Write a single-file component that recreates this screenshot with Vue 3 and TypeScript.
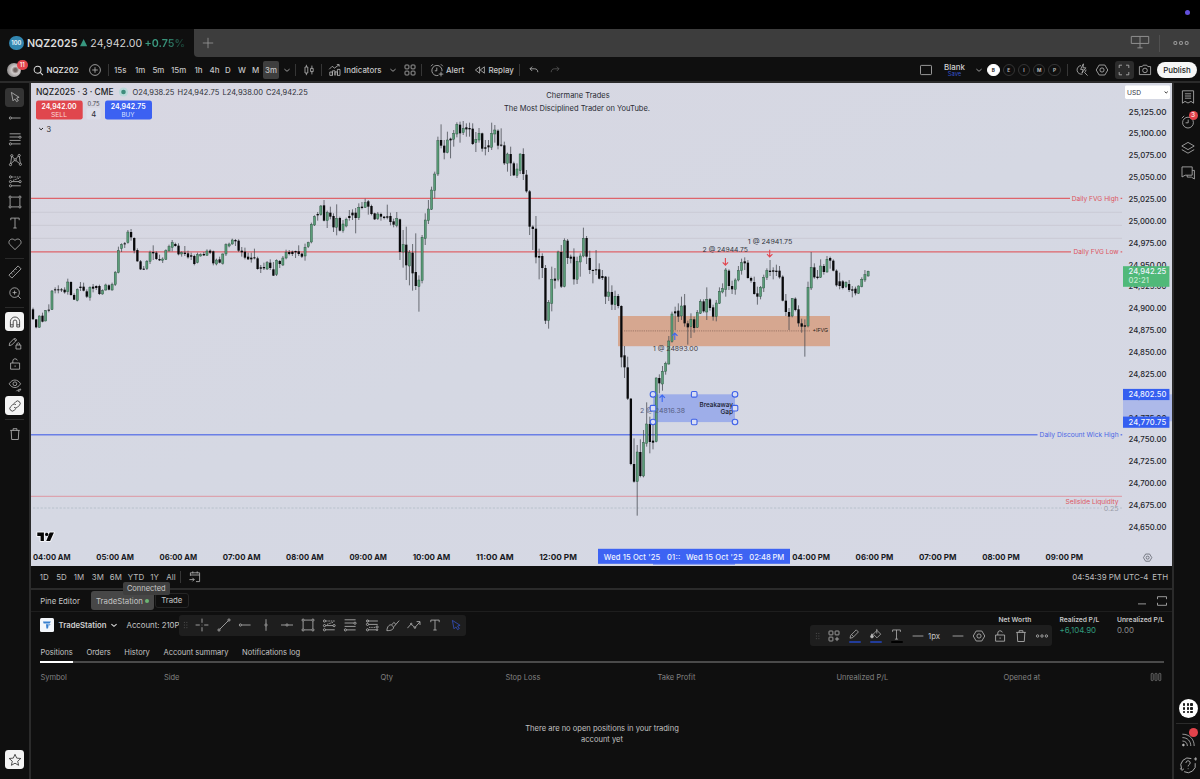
<script setup lang="ts">
interface Candle { x: number; up: boolean; high: number; top: number; bottom: number; low: number }
interface Label { x: number; y: number; w: number; t: string; s?: number; c?: string; b?: number }

/* Each block is a run of candles: direction, high, body top, body bottom, low, in thirds of a pixel from `base`. */
const blocks: { base: number; rows: string }[] = [
  {
    base: 80,
    rows: `b683 688 718 718|b718 718 742 745|g706 708 742 743|b698 707 725 727|g690 692 723 724|b673 689 692 697|g630 633 689 690|b622 628 631 640|b616 628 631 640|b624 628 631 636|b622 629 637 641|g596 606 635 644|b604 606 645 647|b640 645 659 660|g625 629 661 664|b606 620 624 633|b608 620 632 634|b628 634 650 654|g619 622 652 662|b612 620 626 637|b616 618 624 630|b614 618 642 645|g628 632 642 644|g611 615 630 632|b613 616 629 631|g608 614 630 632|g573 578 614 618|g500 512 578 580|g490 494 506 516|b486 490 493 504|g450 456 488 491|b447 456 472 482|b472 474 512 520|b505 510 544 545|b540 544 568 570|b558 566 569 570|g540 544 566 570|g512 518 544 552|b496 516 520 540|b514 518 537 540|b524 537 541 543|g532 537 541 549|g508 512 538 540|g494 500 513 514|g480 488 502 514|b488 492 498 500|b490 497 523 526|g514 518 522 530|b498 518 522 528|b512 520 532 536|b518 526 530 540|b524 528 552 556|g518 524 548 550|g520 524 528 530|b516 522 526 528|g508 513 526 527|b508 512 518 522|b512 514 550 556|g536 540 552 556|b530 538 548 550|g520 522 550 554|g490 494 522 528|g488 492 498 502|g476 480 492 494|b477 480 484 498|b478 482 512 516`,
  },
  {
    base: 180,
    rows: `b201 212 217 230|b203 215 233 238|b218 230 238 240|b218 233 238 248|b206 232 235 238|b230 235 267 269|b255 262 266 279|b248 261 265 270|g243 248 267 270|b238 248 264 270|b246 268 287 288|g238 241 284 288|b240 243 252 264|g228 234 255 258|g209 217 234 238|b210 216 222 226|b212 215 222 228|b212 213 217 234|b196 214 222 228|b218 221 230 234|g191 202 228 242|g185 188 200 204|g128 133 186 190|g106 110 135 138|b96 102 106 122|g75 78 104 107|b60 76 122 124|g92 98 122 144|b80 98 110 118|b100 108 142 156|g73 115 142 166|b110 114 152 154|g120 132 152 158|g113 118 138 142|b90 108 114 122|b88 98 106 120|b84 98 114 160|g70 82 113 120|b66 80 84 88|g56 68 82 84|b60 64 80 104|b74 78 102 106|b98 100 118 120|g96 102 116 120|b98 102 110 122|b108 110 114 118|b74 109 113 118|b98 108 126 136|b116 124 134 142|g96 116 136 142|b116 118 216 240|g150 194 216 263|b140 194 256 300|g210 218 258 316|b192 218 280 332|b160 276 318 330|g286 300 320 395`,
  },
  {
    base: 110,
    rows: `g375 382 512 520|g310 330 386 405|g270 297 332 342|g230 240 298 300|g185 192 242 265|g80 92 192 198|b43 90 107 115|b90 107 128 148|g65 90 128 130|b83 86 91 145|g60 70 88 110|g37 43 72 82|b35 44 70 98|g33 55 68 75|b40 52 58 80|b38 54 58 80|b40 56 102 105|g66 88 98 126|g54 70 90 98|b68 70 116 125|b90 112 116 136|b90 106 112 126|g38 70 112 120|g45 60 72 98|b58 62 107 118|b55 104 107 110|b95 106 160 165|g128 132 160 185|b110 132 160 198|b155 160 196 198|g160 177 196 204|g130 132 182 192|b115 132 192 210|b180 194 244 248|b240 244 350 375|b346 350 357 420|b318 356 442 460|b416 438 443 508|b430 438 474 504|b465 474 632 642|g570 577 632 656|g470 508 580 604|b474 506 512 536|g422 426 508 514|b405 426 530 534|g385 392 530 532|b387 392 444 462|b434 440 446 460|b415 440 508 524|g440 454 508 522|g430 438 456 500|g353 385 438 442|b378 384 440 462`,
  },
  {
    base: 230,
    rows: `b62 84 120 132|b118 120 123 160|b60 118 121 135|b100 118 146 148|b120 138 144 150|b138 140 200 222|g140 186 200 213|b166 186 224 240|g182 199 224 240|b192 198 228 235|b226 228 382 412|b348 376 412 444|b380 412 506 510|b504 506 702 706|b625 702 755 758|g645 666 755 857|b628 666 738 742|g600 638 738 742|g517 582 640 650|b560 582 636 670|b570 632 638 658|g442 444 635 637|b433 444 460 490|g408 424 462 482|g395 400 424 434|g318 333 402 404|g245 252 335 338|b230 244 250 300|b220 242 260 276|g200 228 258 270|b192 226 280 290|b272 280 292 344|g250 268 290 324|b260 268 294 308|g240 248 292 294|g208 215 250 252|b208 214 244 248|g172 208 246 270|b204 208 234 242|b224 232 260 272|g210 219 260 274|g172 184 220 222|g160 176 186 190|g114 120 178 200|b118 122 168 180|b152 168 178 192|g145 150 178 194|g108 122 150 154|g86 98 122 134|b82 94 100 120|b90 98 144 146|b140 144 152 158|b140 156 192 194|b170 190 200 224|g168 172 200 208|g134 142 174 186|g115 122 142 150|b90 122 126 138|b112 121 125 148|b104 122 126 138|b108 122 142 146|b136 140 212 214|b192 212 246 258|b234 246 260 300|g204 206 258 262|b202 206 240 244|b226 238 280 290|b266 280 290 308|b268 286 290 380|g155 172 288 292|g66 112 174 180|b100 112 142 146|b120 140 144 148|g88 108 142 144|b102 108 126 134|g78 88 126 128|b80 84 92 116|b88 92 122 124|b118 122 166 170|b128 154 168 178|b150 154 174 178|g154 158 170 174|b150 162 180 186|b168 178 182 202|b170 176 190 196|g166 168 190 192|g142 148 170 172|g120 134 150 156|g122 124 138 140`,
  },
]

const candles: Candle[] = []
for (const block of blocks) {
  for (const row of block.rows.split('|')) {
    const [high, top, bottom, low] = row.slice(1).split(' ').map((n) => block.base + Number(n) / 3)
    candles.push({ x: 33 + candles.length * 3.1633, up: row[0] === 'g', high, top, bottom, low })
  }
}

const prices = Array.from({ length: 20 }, (_, i) => ({
  y: 111.8 + i * 21.85,
  t: (25125 - i * 25).toLocaleString('en-US', { minimumFractionDigits: 2 }),
}))
const hours = ['04:00 AM', '05:00 AM', '06:00 AM', '07:00 AM', '08:00 AM', '09:00 AM', '10:00 AM', '11:00 AM', '12:00 PM', '', '', '', '04:00 PM', '06:00 PM', '07:00 PM', '08:00 PM', '09:00 PM']
  .map((t, i) => ({ t, x: 33 + 63.28 * i }))
  .filter((h) => h.t)

const labels: Label[] = [
  { x: 36, y: 92.2, w: 77.5, t: 'NQZ2025 · 3 · CME', s: 8.7, c: '#1b1c22', b: 500 },
  { x: 132.5, y: 92.5, w: 41.8, t: 'O24,938.25', s: 7.3 },
  { x: 177.6, y: 92.5, w: 41.6, t: 'H24,942.75', s: 7.3 },
  { x: 222.5, y: 92.5, w: 40.6, t: 'L24,938.00', s: 7.3 },
  { x: 266, y: 92.5, w: 41.7, t: 'C24,942.25', s: 7.3 },
  { x: 41.5, y: 106.6, w: 35, t: '24,942.00', s: 7, c: '#fff', b: 600 },
  { x: 51, y: 114.4, w: 16, t: 'SELL', s: 6.3, c: '#fbdada' },
  { x: 110.7, y: 106.6, w: 35, t: '24,942.75', s: 7, c: '#fff', b: 600 },
  { x: 121.5, y: 114.4, w: 13, t: 'BUY', s: 6.3, c: '#dbe2ff' },
  { x: 87.6, y: 103.8, w: 12, t: '0.75', s: 5.6, c: '#44464f' },
  { x: 91.2, y: 114, w: 5, t: '4', s: 7.8 },
  { x: 46.6, y: 129.5, w: 4.6, t: '3', s: 7.2 },
  { x: 546.3, y: 95, w: 63.4, t: 'Chermane Trades', s: 7.7 },
  { x: 504, y: 108, w: 146, t: 'The Most Disciplined Trader on YouTube.', s: 7.7 },
  { x: 1071.7, y: 198.5, w: 47, t: 'Daily FVG High', s: 6.7, c: '#dd5560' },
  { x: 1073.6, y: 252, w: 45, t: 'Daily FVG Low', s: 6.7, c: '#dd5560' },
  { x: 1039.6, y: 434.8, w: 79, t: 'Daily Discount Wick High', s: 6.7, c: '#4b68e4' },
  { x: 1065.6, y: 502, w: 53, t: 'Sellside Liquidity', s: 6.7, c: '#dd5560' },
  { x: 1103.7, y: 508.4, w: 15, t: '0.25', s: 6.4, c: '#9a9da8' },
  { x: 702.6, y: 249.3, w: 45.4, t: '2 @ 24944.75', s: 6.7, c: '#33363e' },
  { x: 747.8, y: 241.3, w: 44.6, t: '1 @ 24941.75', s: 6.7, c: '#33363e' },
  { x: 653, y: 348.4, w: 45, t: '1 @ 24893.00', s: 6.7, c: '#463d41' },
  { x: 640, y: 410.3, w: 45, t: '2 @ 24816.38', s: 6.7, c: '#555c80' },
  { x: 812.5, y: 330.5, w: 15.5, t: '+IFVG', s: 5.4, c: '#2a1d18' },
  { x: 699.5, y: 404.7, w: 33.5, t: 'Breakaway', s: 6.6, c: '#15182a', b: 500 },
  { x: 720.4, y: 411.6, w: 12.6, t: 'Gap', s: 6.6, c: '#15182a', b: 500 },
  { x: 1127, y: 92.2, w: 14, t: 'USD', s: 6.8, c: '#33353c' },
]

const circ = (x: number, y: number, r = 1.1) => `<circle cx="${x}" cy="${y}" r="${r}"/>`
const icons: Record<string, string> = {
  cursor: '<path d="M3.4 2.4l1.6 8.4 1.9-1.9 1.7 2.7 1.7-1-1.7-2.6 2.5-.7z"/>',
  hray: circ(2.4, 7) + '<path d="M3.6 7h9"/>',
  fib: '<path d="M1.6 1.8h11M1.6 5h9.3M1.6 8.4h11M3.6 11.9h9"/>' + circ(12, 5.2) + circ(2.4, 11.9),
  xabcd: '<path d="M3.6 3.7L2.6 10.6M4.4 3.6l2 2.3M7.8 6L10.4 3M11.4 3.7l.9 6.6M3 10.7l3.4-3.3M7.9 7.5l3.5 3"/>' + circ(3.8, 2.7) + circ(11.2, 2.5) + circ(2.5, 11.6) + circ(12.4, 11.3) + circ(7.2, 6.8),
  long: '<path stroke-dasharray="1.6 .8" d="M3.9 3h9M5 6.4l6-2.2"/><path d="M3.7 7.6h7.4M3.7 11.8h9"/>' + circ(2.5, 3) + circ(2.5, 7.6) + circ(12.1, 7.6) + circ(2.5, 11.8),
  proj: '<path d="M2.5 3h10.4M3.7 6.4h9M3.7 11.8h7.4"/><path stroke-dasharray="1.4 .9" d="M4 9.4h7"/>' + circ(2.5, 3) + circ(2.5, 6.4) + circ(12.1, 9) + circ(2.5, 11.8) + circ(12, 11.8, .8),
  rect: '<path d="M3.4 2.1h7.2M3.4 11.9h7.2M2.1 3.4v7.2M11.9 3.4v7.2"/>' + circ(2.1, 2.1) + circ(11.9, 2.1) + circ(2.1, 11.9) + circ(11.9, 11.9),
  text: '<path d="M2.8 4.2V2.1h8.4v2.1M7 2.1v9.9M5.3 12h3.4"/>',
  heart: '<path d="M7 12.6L1.7 7.4C-.9 4.2 3.6-.2 7 3.4c3.4-3.6 7.9.8 5.3 4z"/>',
  ruler: '<path d="M.9 10.1l9.2-9.2 3 3-9.2 9.2zM3.2 7.8l1.3 1.3M5.2 5.8l1.3 1.3M7.3 3.7l1.3 1.3"/>',
  zoom: '<circle cx="6.6" cy="6.6" r="4.8"/><path d="M10.1 10.1l2.6 2.6M6.6 4.6v4M4.6 6.6h4"/>',
  magnet: '<path d="M2.4 12V6.6a4.6 4.6 0 019.2 0V12H8.8V6.8a1.8 1.8 0 00-3.6 0V12zM2.4 9.8h2.8M8.8 9.8h2.8"/>',
  penlock: '<path d="M1.2 9.6l.5-2.6 5-5 2 2-5 5zM5.8 3l2 2"/><path d="M8 9h4.8v4H8zM9 9V7.8a1.4 1.4 0 012.7 0V9"/>',
  lock: '<path d="M2.6 6h9v6.2h-9zM4.8 6V4a2.3 2.3 0 014.5-.6M7.1 8.4v1.5"/>',
  eye: '<path d="M1.2 5.8c3-5 8.4-5 11.4 0-3 5-8.4 5-11.4 0z"/><circle cx="6.9" cy="5.8" r="1.9"/><path d="M8.4 13.2l1.5-1.5M10 13.2c2 .3 2.6-1 2.8-2.2l-2.3.7z"/>',
  link: '<path d="M6 4.5l1.8-1.8a2.5 2.5 0 013.6 3.6L9.5 8.2a2.5 2.5 0 01-3.4.1M8 9.5l-1.8 1.8a2.5 2.5 0 01-3.6-3.6l1.9-1.9a2.5 2.5 0 013.4-.1"/>',
  trash: '<path d="M2.2 3.4h9.6M5.1 3.4V1.7h3.8v1.7M3.2 3.4l.5 9.1h6.6l.5-9.1"/>',
  star: '<path d="M7 1.3l1.7 3.8 4.1.4-3.1 2.7.9 4.1L7 10.2l-3.6 2.1.9-4.1-3.1-2.7 4.1-.4z"/>',
  list: '<path d="M1.4.8h11.2v12.4l-2.6-1.8-3 1.6-3-1.6-2.6 1.8zM3.9 3.8h6.2M3.9 6h6.2M3.9 8.2h6.2"/>',
  alarm: '<circle cx="7" cy="7.6" r="5.4"/><path d="M7.2 4.6v3.2H4.6M.8 3.2l2.4-2.4"/>',
  alert: '<path d="M8.4 12.4A5.1 5.1 0 1112 8.2M6.8 4.6v3.2H4.8M1 3.2l2-2M12.8 3.2l-2-2M11 8.8v4.6M8.7 11.1h4.6"/>',
  layers: '<path d="M7 1.4l6.2 3.6L7 8.6.8 5zM.8 8.6L7 12.2l6.2-3.6"/>',
  chat: '<path d="M1 .9h10.2v8.3H4.2L1 11zM11.4 4.4h2V13l-3-1.9H6.2V9.4"/>',
  search: '<circle cx="6" cy="6.2" r="3.7"/><path d="M8.8 9l3 3"/>',
  plus: '<circle cx="7" cy="7" r="5.4"/><path d="M7 4.2v5.6M4.2 7h5.6"/>',
  down: '<path d="M4.4 6.1L7 8.3l2.6-2.2"/>',
  bars: '<path d="M3 4h2.8v6H3zM4.4 1.8V4M4.4 10v2.2M8.6 5.4h2.6v3.2H8.6zM9.9 2.6v2.8M9.9 8.6v2.8"/>',
  indic: '<path d="M1.8 12.4V9h2.6v3.4zM4.4 12.4V7.8H7v4.6M7 12.4V8.9h2.4v3.5M9.4 12.4v-6H12v6zM1.2 6.3l3-3 2.3 1.8L11 1.8M8.8 1.6h2.4v2"/>',
  grid: '<rect x="2" y="2" width="3.9" height="3.9" rx=".8"/><rect x="8.1" y="2" width="3.9" height="3.9" rx=".8"/><rect x="2" y="8.1" width="3.9" height="3.9" rx=".8"/><rect x="8.1" y="8.1" width="3.9" height="3.9" rx=".8"/>',
  gridplus: '<rect x="2" y="2" width="3.9" height="3.9" rx=".6"/><rect x="8.1" y="2" width="3.9" height="3.9" rx=".6"/><rect x="2" y="8.1" width="3.9" height="3.9" rx=".6"/><path d="M10 7.9v4.2M7.9 10h4.2"/>',
  replay: '<path d="M6.6 3.8v6.4L2.4 7zM11.4 3.8v6.4L7.2 7z"/>',
  undo: '<path d="M5.2 3.6L3 5.8 5.2 8M3 5.8h4.6c2 0 3.2 1.2 3.2 3.4"/>',
  redo: '<path d="M8.8 3.6L11 5.8 8.8 8M11 5.8H6.4c-2 0-3.2 1.2-3.2 3.4"/>',
  frame: '<rect x="1.5" y="2.4" width="11" height="9.2" rx=".8"/>',
  quick: '<path d="M6 2.6A4.3 4.3 0 107.6 11M9.6 9.6l3 3M11 6.6c0 1.2-.5 2.2-1.4 3M8.4.8L5.6 6.4h2.6L7 10l3.8-5.2H8z"/>',
  hex: '<path d="M4.2 2h5.6l3 5-3 5H4.2l-3-5z"/><circle cx="7" cy="7" r="2.1"/>',
  full: '<path d="M2.2 5V2.2H5M9 2.2h2.8V5M11.8 9v2.8H9M5 11.8H2.2V9"/>',
  maxi: '<path d="M2.5 5.2V2.7h9v2.5M2.5 8.8v2.5h9V8.8"/>',
  camera: '<path d="M1.4 3.6h2.8l1-1.4h3.6l1 1.4h2.8v8H1.4z"/><circle cx="7" cy="7.4" r="2.3"/>',
  cal: '<path d="M2.4 5.8V2.8h9.2v8.8H8M2.4 5h9.2M4.8 1.4v2M9.2 1.4v2M1.4 9.6h4.8M4.4 7.8l1.8 1.8-1.8 1.8"/>',
  cross: '<path d="M7 .6v4.2M7 9.2v4.2M.6 7h4.2M9.2 7h4.2M6.7 7h.6"/>',
  trend: circ(2, 12) + circ(12, 2) + '<path d="M2.9 11.1l8.2-8.2"/>',
  vline: '<path d="M7 1.2v4.6M7 8.2v4.6"/>' + circ(7, 7),
  hline: '<path d="M1 7h4.8M8.2 7H13"/>' + circ(7, 7),
  brush: '<path d="M.8 12.6c.6-4 2-5.8 4.4-5.8l2.4 2.2c0 2.6-2.6 3.8-6.8 3.6zM5.8 6.8l2-2.4M7.8 8.8L13.2 2.6M7.8 4.4l2 1.8"/>',
  path: '<path d="M.4 10.2l3.2-3.6M4.8 6.6l2.6 2.6M8.4 9l4.4-5M9.6 3.6h3.4V7"/>' + circ(4.2, 6, .8) + circ(7.9, 9.6, .8),
  pencil: '<path d="M2.2 11l.7-3 6-6 2.3 2.3-6 6zM3.9 7.2l2.1 2.1"/>',
  bucket: '<path d="M4.6 6.6l4-4 4 4-4 4zM8.4 6V1"/><path fill="currentColor" d="M3.2 6.2L1.6 9.2c0 2 3.2 2 3.2 0z"/>',
  dots: circ(2.6, 7, 1.2) + circ(7, 7, 1.2) + circ(11.4, 7, 1.2),
  line: '<path d="M1.6 7h10.8"/>',
  rss: '<path d="M1.4 1.2c7 0 11.8 4.8 11.8 11.8M1.4 4.6c5 0 8.4 3.4 8.4 8.4M1.4 8c3 0 5 2 5 5"/><circle cx="2.4" cy="12" r=".9" fill="currentColor"/>',
  help: '<path d="M9.6 2A5.9 5.9 0 002 10M4 12.2A5.9 5.9 0 0012.6 5.6M1 9.6l1.2 1.6 1.6-1.2M13 3.6V1M11.6 2.3h2.7M5.4 5.4c0-2.2 3.3-2.2 3.3 0 0 1.3-1.6 1.2-1.6 2.7M7.1 9.6v.6"/>',
  columns: '<rect x="2.2" y="3.4" width="2" height="7.2" rx=".6"/><rect x="6" y="3.4" width="2" height="7.2" rx=".6"/><rect x="9.8" y="3.4" width="2" height="7.2" rx=".6"/>',
  min: '<path d="M3 9.9h8"/>',
  layout: '<path d="M.9 2.4h12.2v4.9H.9zM7 2.4v8M5.2 10.4h3.6"/>',
}

const leftTools: { n: string; on?: string; gap?: boolean }[] = [
  { n: 'cursor', on: 'dim' }, { n: 'hray' }, { n: 'fib' }, { n: 'xabcd' }, { n: 'long' }, { n: 'rect' }, { n: 'text' }, { n: 'heart' },
  { n: 'ruler', gap: true }, { n: 'zoom' },
  { n: 'magnet', on: 'lit', gap: true }, { n: 'penlock' }, { n: 'lock' }, { n: 'eye' }, { n: 'link', on: 'lit' },
  { n: 'trash', gap: true },
]
const intervals = ['15s', '1m', '5m', '15m', '1h', '4h', 'D', 'W', 'M']
const layouts = ['B', 'E', 'I', 'M', 'P']
const ranges = ['1D', '5D', '1M', '3M', '6M', 'YTD', '1Y', 'All']
const drawTools = ['cross', 'trend', 'hray', 'vline', 'hline', 'rect', 'long', 'fib', 'proj', 'brush', 'path', 'text', 'cursor']
const accountTabs = ['Positions', 'Orders', 'History', 'Account summary', 'Notifications log']
const columns = ['Symbol', 'Side', 'Qty', 'Stop Loss', 'Take Profit', 'Unrealized P/L', 'Opened at']
const handles = [
  { x: 653, y: 394.3, r: 2.7 }, { x: 694.2, y: 394.3, r: 1.2 }, { x: 735, y: 394.3, r: 2.7 },
  { x: 653, y: 408.2, r: 1.2 }, { x: 735, y: 408.2, r: 1.2 },
  { x: 653, y: 422, r: 2.7 }, { x: 694.2, y: 422, r: 1.2 }, { x: 735, y: 422, r: 2.7 },
]
</script>

<template>
  <div class="screen">
    <div class="menubar"><i class="mic"></i></div>

    <header class="tabs">
      <div class="tab">
        <span class="badge100">100</span>
        <b class="sym">NQZ2025</b>
        <svg class="tri" viewBox="0 0 7 7"><path d="M3.5 0L7 7H0z" /></svg>
        <span class="px">24,942.00</span>
        <span class="chg">+0.75%</span>
      </div>
      <div class="tabrest">
        <svg class="newtab" viewBox="0 0 12 12"><path d="M6 .8v10.4M.8 6h10.4" /></svg>
        <svg class="ico lay" viewBox="0 0 14 14" v-html="icons.layout"></svg>
        <i class="vsep"></i>
        <svg class="ico more" viewBox="0 0 14 14" v-html="icons.dots"></svg>
      </div>
    </header>

    <nav class="toolbar">
      <span class="avatar"><i></i><em>11</em></span>
      <svg class="ico find" viewBox="0 0 14 14" v-html="icons.search"></svg>
      <b class="query">NQZ202</b>
      <svg class="ico c" viewBox="0 0 14 14" v-html="icons.plus"></svg>
      <i class="sep"></i>
      <span v-for="t in intervals" :key="t">{{ t }}</span>
      <span class="active">3m</span>
      <svg class="ico drop" viewBox="0 0 14 14" v-html="icons.down"></svg>
      <i class="sep"></i>
      <svg class="ico c" viewBox="0 0 14 14" v-html="icons.bars"></svg>
      <i class="sep"></i>
      <svg class="ico e" viewBox="0 0 14 14" v-html="icons.indic"></svg>
      <span>Indicators</span>
      <svg class="ico c" viewBox="0 0 14 14" v-html="icons.down"></svg>
      <svg class="ico c" viewBox="0 0 14 14" v-html="icons.grid"></svg>
      <i class="sep"></i>
      <svg class="ico e" viewBox="0 0 14 14" v-html="icons.alert"></svg>
      <span>Alert</span>
      <svg class="ico e" viewBox="0 0 14 14" v-html="icons.replay"></svg>
      <span>Replay</span>
      <i class="sep"></i>
      <svg class="ico c" viewBox="0 0 14 14" v-html="icons.undo"></svg>
      <svg class="ico c faded" viewBox="0 0 14 14" v-html="icons.redo"></svg>
      <span></span>
      <svg class="ico c" viewBox="0 0 14 14" v-html="icons.frame"></svg>
      <span class="blank">Blank<small>Save</small></span>
      <svg class="ico c" viewBox="0 0 14 14" v-html="icons.down"></svg>
      <span class="letters"><em v-for="l in layouts" :key="l" :class="{ sel: l === 'B' }">{{ l }}</em></span>
      <i class="sep"></i>
      <svg class="ico c" viewBox="0 0 14 14" v-html="icons.quick"></svg>
      <svg class="ico c" viewBox="0 0 14 14" v-html="icons.hex"></svg>
      <span class="fullbox"><svg class="ico" viewBox="0 0 14 14" v-html="icons.full"></svg></span>
      <svg class="ico c" viewBox="0 0 14 14" v-html="icons.camera"></svg>
      <button class="publish">Publish</button>
    </nav>

    <div class="body">
      <aside class="left">
        <template v-for="t in leftTools" :key="t.n">
          <i v-if="t.gap" class="rule"></i>
          <span class="tool" :class="t.on"><svg class="ico" viewBox="0 0 14 14" v-html="icons[t.n]"></svg></span>
        </template>
        <span class="tool lit fav"><svg class="ico" viewBox="0 0 14 14" v-html="icons.star"></svg></span>
      </aside>

      <main class="center">
        <svg class="chart" viewBox="31 83 1141 483">
          <g class="faint"><path d="M31 212.3H1122M31 225.4H1122M31 238.4H1122" /></g>
          <path class="red" d="M31 198.4H1070M31 251.8H1071" />
          <path class="red" d="M1120.6 198.4h1.6M1120.6 251.8h1.6" />
          <path class="blue" d="M31 434.7H1037.5M1120.6 434.7h1.6" />
          <path class="thin" d="M31 496.3H1122" />
          <path class="dash" d="M33 508H1102M1120 508h2" />

          <rect x="618" y="316" width="212" height="30.2" fill="#d6a790" />
          <path d="M624 330.9H810" stroke="#8d6a5c" stroke-width=".8" stroke-dasharray="1.2 1" />
          <rect x="653" y="394.3" width="82" height="27.8" fill="#9eaee9" />

          <g v-for="(c, i) in candles" :key="i">
            <path class="wick" :d="`M${c.x} ${c.high}V${c.low}`" />
            <rect v-if="c.up" :x="c.x - 1.05" :y="c.top" width="2.1" :height="Math.max(c.bottom - c.top, 0.9)" fill="#5a9c78" stroke="#1f4a35" stroke-width=".4" />
            <rect v-else :x="c.x - 1.15" :y="c.top" width="2.3" :height="Math.max(c.bottom - c.top, 0.9)" fill="#08090b" />
          </g>

          <path class="sellarrow" d="M725.4 258v7M722.7 262.4l2.7 2.8 2.7-2.8M769.7 249.8v7M767 254.2l2.7 2.8 2.7-2.8" />
          <path class="buyarrow" d="M662.2 402v-7M659.5 397.8l2.7-2.8 2.7 2.8M674.8 340v-7M672.1 335.8l2.7-2.8 2.7 2.8" />

          <rect x="36" y="100.6" width="46.7" height="19" rx="2.4" fill="#e0464d" />
          <rect x="105" y="100.6" width="47" height="19" rx="2.4" fill="#3c61f2" />
          <rect x="86.4" y="108" width="14.4" height="11.6" rx="2" fill="#dcdee9" />
          <circle cx="123.5" cy="92" r="4.6" fill="#b9dad9" />
          <circle cx="123.5" cy="92" r="2.3" fill="#3f8d7c" />
          <path d="M39.2 128l1.9 1.8 1.9-1.8" fill="none" stroke="#222" stroke-width="1" />

          <rect x="1123" y="394.3" width="49" height="27" fill="#adb9e9" />
          <text v-for="p in prices" :key="p.t" class="axis" x="1128.6" :y="p.y + 2.8" textLength="37.9" lengthAdjust="spacingAndGlyphs">{{ p.t }}</text>
          <text v-for="h in hours" :key="h.t" class="time" :x="h.x" y="560.4" textLength="37.6" lengthAdjust="spacingAndGlyphs">{{ h.t }}</text>

          <rect x="1125" y="85.6" width="45" height="13.4" rx="1.4" fill="#fff" />
          <path d="M1164.6 91.6l1.6 1.4 1.6-1.4" fill="none" stroke="#222" stroke-width=".9" />
          <rect x="1123" y="266.2" width="46.4" height="20.6" fill="#50b979" />
          <text class="tag" x="1128.6" y="274.4" textLength="37.7">24,942.25</text>
          <text class="tag soft" x="1128.4" y="283.2" textLength="20.6">02:21</text>
          <rect x="1123" y="388.9" width="46.4" height="11.2" fill="#355ff0" />
          <text class="tag" x="1128.6" y="397.2" textLength="37.7">24,802.50</text>
          <rect x="1123" y="416.6" width="46.4" height="11.2" fill="#355ff0" />
          <text class="tag" x="1128.6" y="424.9" textLength="37.7">24,770.75</text>

          <rect x="653" y="562" width="82" height="2.8" fill="#7b92f3" />
          <rect x="598" y="548.8" width="192" height="15" fill="#3d63f3" />
          <text class="tag" x="603.8" y="560" textLength="56.4">Wed 15 Oct '25</text>
          <text class="tag" x="667" y="560" textLength="13.2">01::</text>
          <text class="tag" x="686" y="560" textLength="56.6">Wed 15 Oct '25</text>
          <text class="tag" x="749.3" y="560" textLength="35">02:48 PM</text>

          <text
            v-for="(l, i) in labels" :key="'t' + i" :x="l.x" :y="l.y + (l.s ?? 7) * 0.36" :textLength="l.w" lengthAdjust="spacingAndGlyphs"
            :font-size="l.s" :fill="l.c ?? '#2b2d35'" :font-weight="l.b ?? 400"
          >{{ l.t }}</text>
          <rect v-for="(h, i) in handles" :key="'h' + i" class="handle" :x="h.x - 2.8" :y="h.y - 2.8" width="5.6" height="5.6" :rx="h.r" />

          <g class="logo" transform="translate(37.3 532.6)">
            <path stroke="#f4f5fa" stroke-width="2" stroke-linejoin="round" d="M0 0H6.6V8.4H3.3V3.5H0zM12 0H16.6L12.8 8.4H9z" />
            <circle cx="9.4" cy="1.8" r="1.7" />
            <path d="M0 0H6.6V8.4H3.3V3.5H0zM12.4 0H16.6L12.8 8.4H8.9z" />
          </g>
          <g class="gear" transform="translate(1142.6 552.6) scale(.72)" v-html="icons.hex"></g>
        </svg>

        <div class="ranges">
          <span v-for="r in ranges" :key="r">{{ r }}</span>
          <i class="sep"></i>
          <svg class="ico c" viewBox="0 0 14 14" v-html="icons.cal"></svg>
          <span></span>
          <span>04:54:39 PM UTC-4</span>
          <span>ETH</span>
          <div class="tip">Connected</div>
        </div>

        <section class="panel">
          <div class="phead">
            <span class="pine">Pine Editor</span>
            <span class="chip">TradeStation<i></i></span>
            <span class="trade">Trade</span>
            <svg class="ico minim" viewBox="0 0 14 14" v-html="icons.min"></svg>
            <svg class="ico maxim" viewBox="0 0 14 14" v-html="icons.maxi"></svg>
          </div>
          <div class="broker">
            <span class="blogo"><svg viewBox="0 0 10 10"><path d="M1 1.6h8L7.6 3.4H1.6zM4 4.2h2.8L6 8.6H4.4zM7.4 4h1.2L7.2 6z" /></svg></span>
            <b>TradeStation</b>
            <svg class="ico bright" viewBox="0 0 14 14" v-html="icons.down"></svg>
            <span>Account: 210P</span>
            <div class="stat"><b>Net Worth</b></div>
            <div class="stat"><b>Realized P/L</b><em class="pos">+6,104.90</em></div>
            <div class="stat"><b>Unrealized P/L</b><em>0.00</em></div>
          </div>
          <div class="atabs"><span v-for="(t, i) in accountTabs" :key="t" :class="{ cur: i === 0 }">{{ t }}</span></div>
          <div class="thead">
            <span v-for="c in columns" :key="c">{{ c }}</span>
            <svg class="ico" viewBox="0 0 14 14" v-html="icons.columns"></svg>
          </div>
          <p class="empty">There are no open positions in your trading account yet</p>

          <div class="float draw">
            <i class="grip"></i>
            <svg v-for="t in drawTools" :key="t" class="ico" :class="{ sel: t === 'cursor' }" viewBox="0 0 14 14" v-html="icons[t]"></svg>
          </div>
          <div class="float style">
            <i class="grip"></i>
            <svg class="ico" viewBox="0 0 14 14" v-html="icons.gridplus"></svg>
            <span class="ink"><svg class="ico" viewBox="0 0 14 14" v-html="icons.pencil"></svg><i></i></span>
            <span class="ink"><svg class="ico" viewBox="0 0 14 14" v-html="icons.bucket"></svg><i></i></span>
            <span class="ink dark"><svg class="ico" viewBox="0 0 14 14" v-html="icons.text"></svg><i></i></span>
            <svg class="ico" viewBox="0 0 14 14" v-html="icons.line"></svg>
            <span class="w1">1px</span>
            <svg class="ico" viewBox="0 0 14 14" v-html="icons.line"></svg>
            <svg class="ico" viewBox="0 0 14 14" v-html="icons.hex"></svg>
            <svg class="ico" viewBox="0 0 14 14" v-html="icons.lock"></svg>
            <svg class="ico" viewBox="0 0 14 14" v-html="icons.trash"></svg>
            <svg class="ico" viewBox="0 0 14 14" v-html="icons.dots"></svg>
          </div>
        </section>
      </main>

      <aside class="right">
        <svg class="ico" viewBox="0 0 14 14" v-html="icons.list"></svg>
        <span class="rt"><svg class="ico" viewBox="0 0 14 14" v-html="icons.alarm"></svg><em class="cnt">3</em></span>
        <svg class="ico" viewBox="0 0 14 14" v-html="icons.layers"></svg>
        <svg class="ico" viewBox="0 0 14 14" v-html="icons.chat"></svg>
        <span class="apps"><i v-for="n in 9" :key="n"></i></span>
        <i class="rule"></i>
        <span class="rt"><svg class="ico" viewBox="0 0 14 14" v-html="icons.rss"></svg><em class="cnt"></em></span>
        <svg class="ico help" viewBox="0 0 14 14" v-html="icons.help"></svg>
      </aside>
    </div>
  </div>
</template>

<style>
html, body { margin: 0; background: #0f0f0f; overflow: hidden; }
</style>

<style scoped>
.screen { width: 1200px; height: 779px; display: flex; flex-direction: column; background: #0f0f0f; color: #c4c4c4; font-family: Inter, "Liberation Sans", sans-serif; font-size: 7.8px; overflow: hidden; white-space: nowrap; }
em, i { font-style: normal; display: block; }
b { font-weight: 600; }
.ico { width: 14px; height: 14px; fill: none; stroke: currentColor; stroke-width: .8; color: #bababa; display: block; flex: none; }
.c { justify-self: center; }
.e { justify-self: end; margin-right: 1.8px; }
.bright { color: #ddd; stroke-width: 1.1; }
.find { color: #ddd; stroke-width: 1.1; width: 13px; height: 13px; margin-left: -.8px; }
.drop { margin-left: .6px; }
.toolbar .faded { color: #5a5a5a; }

.menubar { height: 29px; background: #000; display: flex; justify-content: flex-end; }
.mic { width: 5px; height: 5px; border-radius: 50%; background: #6250dc; margin: 10px 10.5px 0 0; }

.tabs { height: 28px; display: flex; background: #0f0f0f; }
.tab { width: 194px; display: flex; align-items: center; box-sizing: border-box; padding-left: 9px; font-size: 10.5px; color: #d4d4d4; }
.badge100 { width: 14.6px; height: 14.6px; border-radius: 50%; background: #3286b0; color: #e8f4fa; font-size: 5.6px; font-weight: 700; display: grid; place-items: center; }
.sym { margin-left: 3.4px; font-size: 10.7px; width: 49px; color: #dcdcdc; }
.tri { width: 7.2px; height: 7.2px; fill: #37977f; margin: 0 3.6px 0 3.6px; }
.px { width: 54.2px; font-size: 10.6px; }
.chg { font-size: 10.7px; font-weight: 600; color: transparent; background: linear-gradient(90deg, #3b9c82 45%, #16352c 100%); background-clip: text; }
.tabrest { flex: 1; background: #3d3d3d; border-radius: 0 0 0 4px; display: flex; align-items: center; color: #999; }
.newtab { width: 12px; height: 12px; margin-left: 8.4px; fill: none; stroke: #9a9a9a; stroke-width: .8; }
.lay { margin-left: auto; width: 20px; height: 20px; color: #8f8f8f; stroke-width: .7; }
.vsep { width: 1px; height: 17px; background: #505050; margin: 0 12px 0 9px; }
.more { width: 18px; height: 18px; margin-right: 10.5px; color: #9c9c9c; }

.toolbar { height: 26px; box-sizing: border-box; padding-top: 2px; border-bottom: 2px solid #2b2b2b; display: grid; align-items: center; color: #c6c6c6;
  grid-template-columns: 32.7px 13.8px 39.5px 18px 10px 21px 17.5px 18.5px 23.5px 15px 15.5px 13px 14px 11px 16px 13px 7px 20px 5px 20px 40.5px 16.5px 18px 5px 22px 20.5px 22px 28.5px 6px 22px 20px 350px 22px 35px 15px 74px 14px 15px 25px 18.6px 23.4px 40px; }
.toolbar > span { font-size: 7.9px; font-weight: 500; }
.toolbar .sep, .ranges .sep { width: 1px; height: 12px; background: #363636; justify-self: center; }
.avatar { padding-left: 6.5px; display: flex; }
.avatar i { width: 14.6px; height: 14.6px; border-radius: 50%; background: radial-gradient(circle at 60% 50%, #6e625f 0 14%, #cfcaca 34%, #8f8c8c 75%); }
.avatar em { background: #e2434b; color: #fff; font-size: 6px; height: 9.4px; line-height: 9.6px; width: 11px; text-align: center; border-radius: 5px; margin: -2.5px 0 0 -4.4px; z-index: 1; }
.query { color: #dadada; font-size: 7.9px; }
.toolbar .active { background: #3e3e3e; border-radius: 2px; height: 18px; line-height: 18px; text-align: center; }
.blank { line-height: 8px; color: #cfcfcf; display: flex; flex-direction: column; align-items: center; }
.blank small { font-size: 5.8px; color: #3553cf; line-height: 6px; font-weight: 400; }
.letters { display: flex; gap: 3.1px; justify-content: center; }
.letters em { flex: none; width: 10.2px; height: 10.2px; border: 1px solid #343434; border-radius: 50%; font-size: 4.8px; font-weight: 700; display: grid; place-items: center; color: #bbb; }
.letters .sel { background: #fff; color: #222; border-color: #fff; }
.fullbox { width: 19px; height: 18.6px; border-radius: 3px; background: #2c2c2c; display: grid; place-items: center; }
.publish { width: 40px; height: 16px; margin: 0; padding: 0; border: 0; border-radius: 8px; background: #f6f6f6; color: #1b1b1b; font: 500 7.9px Inter, sans-serif; }

.body { flex: 1; min-height: 0; display: flex; }
.left { width: 29px; border-right: 2px solid #2b2b2b; display: flex; flex-direction: column; align-items: center; padding-top: 3.5px; box-sizing: content-box; height: 692.5px; flex: none; }
.left .rule { width: 19px; height: 1px; background: #2b2b2b; margin: 3.2px 0; flex: none; }
.tool { width: 19px; height: 19px; margin: 1px 0; border-radius: 3.4px; display: grid; place-items: center; flex: none; }
.dim { background: #343434; }
.lit { background: #f4f4f4; }
.lit .ico { color: #2a2a2a; }
.fav { margin: auto 0 9.6px; }

.center { width: 1141px; display: flex; flex-direction: column; position: relative; flex: none; }
.chart { width: 1141px; height: 483px; display: block; flex: none; background: linear-gradient(160deg, #d8d7e2, #d5d8e3 50%, #d6d8e4); font-family: Inter, sans-serif; }
.faint path { stroke: #c8cad4; stroke-width: .9; fill: none; }
.red { stroke: #de646b; stroke-width: 1.2; }
.blue { stroke: #6a7fe6; stroke-width: 1.4; }
.thin { stroke: #e08f9a; stroke-width: .9; }
.dash { stroke: #b4bfc9; stroke-width: .9; stroke-dasharray: 2.2 1.6; }
.wick { stroke: #43474d; stroke-width: .75; }
.sellarrow { stroke: #e24650; fill: none; stroke-width: 1.1; }
.buyarrow { stroke: #3d68f0; fill: none; stroke-width: 1.1; }
.handle { fill: #d9def5; stroke: #3f62e8; stroke-width: 1.1; }
.axis { font-size: 7.9px; font-weight: 500; fill: #25272e; }
.time { font-size: 7.7px; font-weight: 650; fill: #17181d; }
.tag { font-size: 7.6px; fill: #f0f3ff; font-weight: 500; }
.soft { fill: #c5ebd2; }
.logo { fill: #050505; }
.gear { fill: none; stroke: #555862; stroke-width: 1; }

.ranges { height: 22px; display: grid; align-items: center; position: relative; color: #bdbdbd; font-size: 7.9px;
  grid-template-columns: 16.5px 17.5px 18px 18px 18px 22.5px 16px 11px 7px 21px 867px 80px 20px; padding-left: 8.8px; flex: none; }
.tip { position: absolute; left: 92px; top: 15.5px; width: 46.6px; height: 13px; border-radius: 2px; background: #3f3f3f; color: #c9c9c9; font-size: 7.5px; line-height: 13px; text-align: center; z-index: 3; }

.panel { flex: 1; border-top: 2px solid #2b2b2b; position: relative; }
.phead { height: 22px; box-sizing: border-box; border-bottom: 1px solid #1e1e1e; display: flex; align-items: center; }
.pine { width: 51px; margin-left: 9.2px; }
.chip { width: 62.6px; height: 18.6px; border-radius: 3px; background: #474747; display: flex; align-items: center; justify-content: center; gap: 2px; }
.chip i { width: 4px; height: 4px; border-radius: 50%; background: #6cb573; }
.trade { width: 32px; height: 13px; line-height: 13px; border: 1px solid #252525; border-radius: 3px; margin-left: 1px; text-align: center; }
.minim { margin-left: auto; margin-right: 5.6px; }
.maxim { margin-right: 3px; }
.broker { height: 30px; display: grid; grid-template-columns: 18.5px 51px 17px 872px 61px 57.6px 50px; padding-left: 9px; align-items: center; }
.broker > * { margin-top: -4px; }
.broker > b { color: #cfcfcf; font-size: 7.75px; }
.broker > .ico { margin-left: -2.5px; }
.blogo { width: 13.6px; height: 13.6px; border-radius: 1.5px; background: #f3f6fb; display: grid; place-items: center; }
.blogo svg { width: 10px; height: 10px; fill: #3a80cf; }
.stat { align-self: start; padding-top: 7px; line-height: 10px; display: flex; flex-direction: column; }
.stat b { font-size: 6.7px; color: #c6c6c6; }
.stat em { font-size: 7.9px; color: #8c8c8c; }
.stat .pos { color: #31997c; }
.atabs { margin: 0 8px 0 9.4px; height: 20.5px; box-sizing: border-box; border-bottom: 2px solid #4a4a4a; display: flex; align-items: flex-end; gap: 13.6px; font-size: 7.55px; }
.atabs span { padding-bottom: 3.8px; margin-bottom: -2px; border-bottom: 2px solid transparent; color: #c4c4c4; }
.atabs .cur { border-color: #fff; }
.thead { margin-top: 7.5px; height: 14px; display: grid; grid-template-columns: 123.5px 216.5px 125px 152px 179px 167px 146px 14px; padding-left: 9.4px; align-items: center; color: #828282; font-size: 7.5px; }
.thead .ico { color: #777; }
.empty { width: 180px; margin: 40px 0 0 481px; text-align: center; line-height: 10.6px; white-space: normal; color: #c2c2c2; font-size: 7.55px; }

.float { position: absolute; background: #1e1e1e; border-radius: 3px; height: 20.6px; display: flex; align-items: center; }
.draw { left: 148px; top: 25px; width: 287px; gap: 7.15px; }
.draw .grip { margin-left: 4.3px; }
.draw .ico.sel { color: #3350c4; }
.grip { width: 5px; height: 8px; flex: none; background: radial-gradient(circle, #5b5b5b 0 .6px, transparent .8px) 0 0 / 2.6px 2.7px; }
.style { left: 779px; top: 35.4px; width: 242px; gap: 7.1px; }
.style .grip { margin: 0 0 0 4.6px; }
.ink { flex: none; width: 14px; height: 15px; display: flex; flex-direction: column; align-items: center; }
.ink .ico { width: 13px; height: 13px; }
.ink i { width: 12px; height: 2px; border-radius: 1px; background: #223c9a; flex: none; }
.ink.dark i { background: #000; }
.w1 { font-size: 7.8px; margin: 0 4px 0 -4.2px; }

.right { width: 26px; border-left: 2px solid #2b2b2b; display: flex; flex-direction: column; align-items: center; padding: 7px 0 0; position: relative; flex: none; }
.right > .ico, .rt { margin-bottom: 11.4px; margin-left: 1px; flex: none; }
.rt { position: relative; width: 14px; height: 14px; }
.cnt { position: absolute; left: 8px; top: -4.6px; width: 9px; height: 9px; border-radius: 50%; background: #e2434b; color: #fff; font-size: 6.6px; line-height: 9px; text-align: center; }
.apps { margin: auto 0 0 2px; width: 19px; height: 19px; border-radius: 50%; background: #fff; box-sizing: border-box; padding: 4.4px; display: grid; grid-template-columns: repeat(3, 2.6px); gap: 1.2px; grid-auto-rows: 2.6px; flex: none; }
.apps i { background: #1c1c1c; border-radius: .8px; }
.right .rule { width: 22px; height: 1px; background: #2b2b2b; margin: 5.6px 0 8.6px; flex: none; }
.right .help { width: 18px; height: 18px; margin-bottom: 5px; margin-left: 1px; stroke-width: .7; }
.right .rule + .rt { margin-bottom: 9px; }
</style>
